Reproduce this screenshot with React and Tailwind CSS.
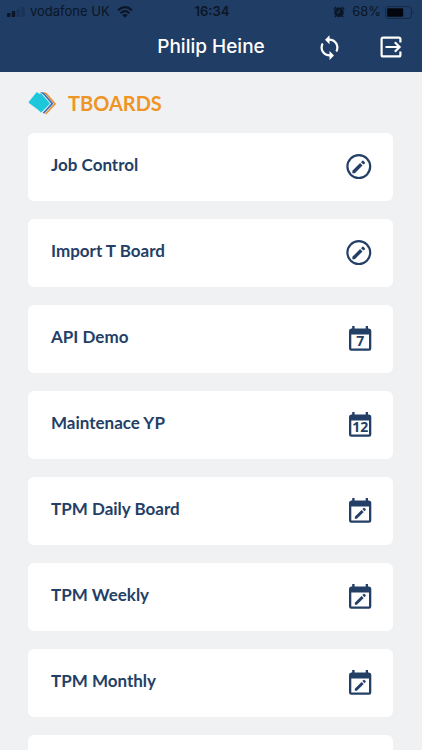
import { MdSync } from "react-icons/md";

const boards = [
  { title: "Job Control", icon: "circle" },
  { title: "Import T Board", icon: "circle" },
  { title: "API Demo", icon: "calendar", day: "7" },
  { title: "Maintenace YP", icon: "calendar", day: "12" },
  { title: "TPM Daily Board", icon: "calendar" },
  { title: "TPM Weekly", icon: "calendar" },
  { title: "TPM Monthly", icon: "calendar" },
  { title: "" },
];

const CircleEditIcon = () => (
  <svg viewBox="0 0 26 26" className="size-[26px]" aria-hidden="true">
    <circle
      cx="12.8"
      cy="12.6"
      r="11.4"
      fill="none"
      stroke="currentColor"
      strokeWidth="2.2"
    />
    <path
      d="M6.4 16.8 14.1 9.1 16.5 11.5 8.8 19.2H6.4Z"
      fill="currentColor"
    />
    <path
      d="M15 8.2 16.4 6.8Q16.9 6.4 17.4 6.8L18.8 8.2Q19.2 8.7 18.8 9.2L17.4 10.6Z"
      fill="currentColor"
    />
  </svg>
);

const CalendarIcon = ({ day }) => (
  <svg viewBox="0 0 26 26" className="size-[26px]" aria-hidden="true">
    <path
      fillRule="evenodd"
      d="M6.2 0H8.6V2.4H19.7V0H22V2.4H23Q25.3 2.6 25.3 4.8V22.4Q25.3 24.7 23 24.7H5.3Q3 24.7 3 22.4V4.8Q3 2.6 5.3 2.4H6.2ZM5.3 8.4V22.4H23V8.4Z"
      fill="currentColor"
    />
    {day ? (
      <text
        x="14.2"
        y="20"
        textAnchor="middle"
        fill="currentColor"
        className="font-['Open_Sans',sans-serif] text-[14px] font-bold"
      >
        {day}
      </text>
    ) : (
      <>
        <path
          d="M8.8 18.7 15.6 11.9 17.7 14 10.9 20.8H8.8Z"
          fill="currentColor"
        />
        <path
          d="M16.4 11.1 17.5 10Q18 9.6 18.5 10L19.6 11.1Q20 11.6 19.6 12.1L18.5 13.2Z"
          fill="currentColor"
        />
      </>
    )}
  </svg>
);

const LogoutIcon = () => (
  <svg
    viewBox="0 0 22 22"
    className="size-[22px]"
    fill="none"
    stroke="currentColor"
    strokeWidth="2.2"
    aria-hidden="true"
  >
    <path d="M20.4 6.4V3.1Q20.4 1.6 18.9 1.6H3.1Q1.6 1.6 1.6 3.1V18.9Q1.6 20.4 3.1 20.4H18.9Q20.4 20.4 20.4 18.9V15.6" />
    <path d="M5.5 11H19.4M14.8 6.2 19.6 11 14.8 15.8" />
  </svg>
);

const BoardsLogo = () => (
  <svg viewBox="0 0 28 24" className="h-6 w-7" aria-hidden="true">
    <g fill="none" strokeLinejoin="round">
      <path
        d="M15.6 2.2Q17.6 2 18.8 3.4L27 12.9 17.6 23"
        stroke="#e8943a"
        strokeWidth="1.7"
      />
      <path
        d="M12.6 2.2Q15 1.8 16.2 3.2L24.2 12.6 15.4 22.2"
        stroke="#3a6fb5"
        strokeWidth="1.7"
      />
    </g>
    <path
      d="M8.2 1.3Q9.2.5 10.3 1.7 11.3 2.7 12.5 2.3 13.2 2.1 13.8 2.7L21.7 11.7Q22.2 12.5 21.7 13.2L14 21.2Q13.2 22 12.3 21.2 11.3 20.1 10.2 19.2L.8 12.2Q0 11.4.7 10.6Z"
      fill="#1cc7dc"
      stroke="#f0f1f3"
      strokeWidth="0.7"
    />
  </svg>
);

const StatusBar = () => (
  <div className="grid h-6 grid-cols-[1fr_auto_1fr] items-center px-[7px] text-[13px] text-[#0b1626]">
    <div className="flex items-center gap-[5px]">
      <svg viewBox="0 0 18 10" className="h-[10px] w-[18px]" aria-hidden="true">
        <rect x="0" y="6" width="3.4" height="4" rx="0.8" fill="currentColor" />
        <rect x="4.8" y="4" width="3.4" height="6" rx="0.8" fill="currentColor" />
        <rect x="9.6" y="2" width="3.4" height="8" rx="0.8" fill="#1a3356" />
        <rect x="14.4" y="0" width="3.4" height="10" rx="0.8" fill="#1a3356" />
      </svg>
      <span>vodafone UK</span>
      <svg viewBox="0 0 16 12" className="ml-[2px] h-3 w-4" aria-hidden="true">
        <g fill="none" stroke="currentColor" strokeWidth="2.2">
          <path d="M1 4.3Q8-2 15 4.3" />
          <path d="M3.6 7.2Q8 3.2 12.4 7.2" />
        </g>
        <path d="M5.4 9Q8 6.9 10.6 9L8 11.7Z" fill="currentColor" />
      </svg>
    </div>
    <span className="pl-[2px] font-semibold">16:34</span>
    <div className="flex items-center justify-end">
      <svg viewBox="0 0 12 12" className="mr-[7px] size-3" aria-hidden="true">
        <circle cx="6" cy="6.4" r="4.8" fill="currentColor" />
        <path
          d="M.8 3.2 3.2 1M11.2 3.2 8.8 1M2.8 10 2 11.2M9.2 10 10 11.2"
          stroke="currentColor"
          strokeWidth="1.4"
        />
        <path d="M6 3.8V6.8H3.8" fill="none" stroke="#203d65" />
      </svg>
      <span>68%</span>
      <svg
        viewBox="0 0 30 13"
        className="ml-1 h-[13px] w-[30px]"
        aria-hidden="true"
      >
        <rect
          x="0.6"
          y="0.6"
          width="25.8"
          height="11.8"
          rx="2.6"
          fill="none"
          stroke="#142848"
        />
        <rect x="2.2" y="2.2" width="16" height="8.6" rx="1" fill="#03070d" />
        <path d="M28 4.4Q29.6 6.5 28 8.6Z" fill="#142848" />
      </svg>
    </div>
  </div>
);

const BoardCard = ({ board }) => (
  <li>
    <button
      type="button"
      className="flex h-[68px] w-full items-center justify-between rounded-md bg-white pr-[21px] pl-[23px] text-left text-[#243f66]"
    >
      <span className="pb-1 text-[17px] leading-6 font-bold">
        {board.title}
      </span>
      {board.icon === "circle" && <CircleEditIcon />}
      {board.icon === "calendar" && <CalendarIcon day={board.day} />}
    </button>
  </li>
);

export default function App() {
  return (
    <div className="flex h-screen flex-col overflow-hidden bg-[#f0f1f3] font-[Lato,sans-serif]">
      <header className="shrink-0 bg-[#203d65] pb-[2px] font-[Inter,sans-serif]">
        <StatusBar />
        <div className="grid h-[46px] grid-cols-[1fr_auto_1fr] items-center px-5 text-white">
          <h1 className="col-start-2 text-[19px] font-medium">Philip Heine</h1>
          <div className="flex items-center justify-end gap-[37px]">
            <button type="button" aria-label="Sync">
              <MdSync className="size-[27px]" />
            </button>
            <button type="button" aria-label="Log out">
              <LogoutIcon />
            </button>
          </div>
        </div>
      </header>

      <main className="flex-1 overflow-y-auto pr-[29px] pl-7 [scrollbar-width:none]">
        <div className="flex h-[61px] items-center gap-3">
          <BoardsLogo />
          <h2 className="text-[20px] font-bold text-[#ee9526]">TBOARDS</h2>
        </div>
        <ul className="flex flex-col gap-[18px]">
          {boards.map((board, i) => (
            <BoardCard key={i} board={board} />
          ))}
        </ul>
      </main>
    </div>
  );
}
